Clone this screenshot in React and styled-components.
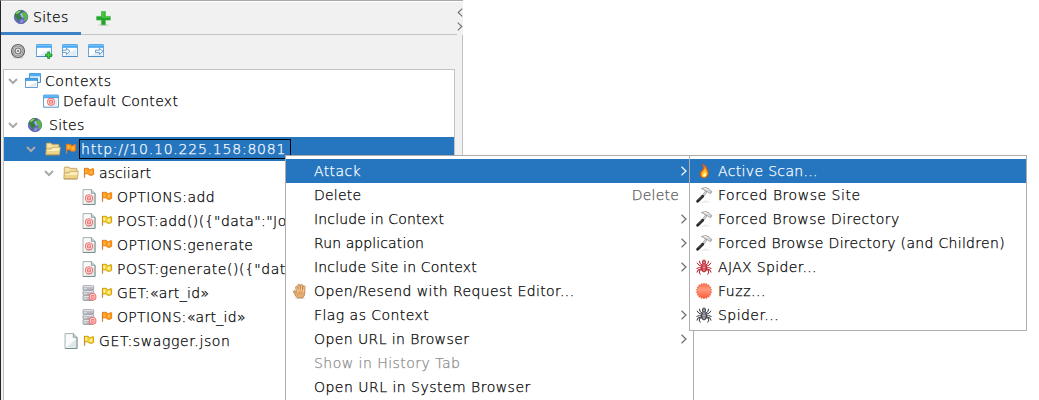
import React from "react";
import styled, { createGlobalStyle, css } from "styled-components";

const GlobalStyle = createGlobalStyle`
  body {
    margin: 0;
    background: #fff;
    overflow: hidden;
  }
  * {
    box-sizing: border-box;
  }
  svg {
    display: block;
    flex: none;
    overflow: visible;
  }
`;

const Screen = styled.div`
  position: relative;
  width: 1039px;
  height: 400px;
  overflow: hidden;
  background: #fff;
  color: #000;
  font: 200 14px/24px "DejaVu Sans Light", "DejaVu Sans", sans-serif;
  -webkit-text-stroke: 0.25px currentColor;
  white-space: pre;
`;

const Panel = styled.section`
  display: flex;
  flex-direction: column;
  width: 463px;
  height: 400px;
  background: #f1f1f1;
  border-left: 1px solid #24232e;
  border-top: 1px solid #a9a9a9;
`;

const TabBar = styled.header`
  display: flex;
  height: 34px;
  border-top: 1px solid #fff;
`;

const TabStrip = styled.div`
  display: flex;
  flex: none;
  width: 456px;
  border-bottom: 1px solid #c2c2c2;
`;

const ActiveTab = styled.div`
  display: flex;
  align-items: center;
  gap: 4px;
  width: 80px;
  height: 33px;
  padding-left: 12px;
  border-bottom: 3px solid #3d80c4;
`;

const AddTab = styled.div`
  display: flex;
  align-items: center;
  width: 44px;
  height: 32px;
  padding-left: 14px;
`;

const ScrollArrows = styled.div`
  display: flex;
  flex-direction: column;
  gap: 5px;
  width: 6px;
  padding-top: 6px;
`;

const NextTabEdge = styled.span`
  width: 1px;
  height: 3px;
  margin: auto 0 0 auto;
  background: #8dbde4;
`;

const Toolbar = styled.div`
  display: flex;
  align-items: center;
  gap: 10px;
  height: 34px;
  padding: 0 0 2px 9px;
  border-right: 1px solid #c2c2c2;
`;

const TreeFrame = styled.div`
  flex: 1;
  padding: 0 7px 0 2px;
  border-right: 1px solid #c2c2c2;
`;

const Tree = styled.div`
  height: 100%;
  padding-top: 1px;
  border: 1px solid #c2c2c2;
  border-bottom: 0;
  background: #fff;
`;

const Branch = styled.div`
  margin-top: ${(p) => p.$top || 0}px;
`;

const TreeRow = styled.div`
  display: flex;
  align-items: center;
  height: ${(p) => p.$height || 24}px;
  padding-left: ${(p) => p.$indent}px;
  overflow: hidden;
  ${(p) =>
    p.$selected &&
    css`
      background: #2675bf;
      color: #fff;
    `}
`;

const Toggle = styled.span`
  display: flex;
  width: ${(p) => p.$width || 19}px;
  flex: none;
`;

const TreeIcon = styled.span`
  flex: none;
  width: ${(p) => p.$width || 18}px;
`;

const Label = styled.span`
  letter-spacing: ${(p) => p.$track || 0}px;
`;

const FocusLabel = styled(Label)`
  height: 20px;
  margin-left: -2px;
  width: 212px;
  padding: 0 0 0 1px;
  line-height: 18px;
  border: 1px solid #000;
`;

const Menu = styled.div`
  position: absolute;
  top: 155px;
  left: ${(p) => p.$left}px;
  width: ${(p) => p.$width}px;
  height: ${(p) => p.$height}px;
  padding: 3px 0;
  background: #fff;
  border: 1px solid #adadad;
`;

const MenuItem = styled.div`
  display: flex;
  align-items: center;
  height: 24px;
  padding: 0 6px;
  color: ${(p) => (p.$active ? "#fff" : p.$disabled ? "#8c8c8c" : "#000")};
  background: ${(p) => (p.$active ? "#2675bf" : "transparent")};
`;

const MenuIcon = styled.span`
  width: 22px;
  height: 16px;
  flex: none;
`;

const Shortcut = styled(Label)`
  margin-left: auto;
  margin-right: 8px;
  color: #595959;
`;

const ArrowSlot = styled.span`
  margin-left: auto;
`;

function Svg({ size = 16, children }) {
  return (
    <svg width={size} height={size} viewBox="0 0 16 16">
      {children}
    </svg>
  );
}

const Chevron = () => (
  <svg width="10" height="8" viewBox="0 0 10 8" fill="none" stroke="#a9a9a9" strokeWidth="2">
    <path d="M1 2l4 4 4-4" />
  </svg>
);

const Arrow = ({ color = "#6e6e6e", left, height = 10 }) => (
  <svg width="6" height={height} viewBox="0 0 6 10" fill="none" stroke={color} strokeWidth="1.2">
    <path d={left ? "M5.5 .8L1 5l4.5 4.2" : "M.5 .8L5 5 .5 9.2"} />
  </svg>
);

const Globe = () => (
  <Svg>
    <circle cx="8" cy="8" r="6.7" fill="#6c6bc9" stroke="#4a4c9c" strokeWidth=".7" />
    <path d="M2 5.2Q4 1 8.3 1.3L10 2.4 8.2 4 6 5 7.2 7 9 8.3 8 10 6.2 10.4 5.7 13.8Q4 12.5 4.5 10L2 7.5Z" fill="#35803a" />
    <path d="M9 4L12 2.8Q15.4 5.5 14.3 10L12.3 12.7 11 10.6 11.8 8.6 9.7 7 8.7 5.4Z" fill="#56bb3f" />
    <path d="M3 4Q5 1.5 8 1.8L6.7 3.2 3.4 5.3Z" fill="#94d67a" />
    <path d="M7.3 4.7l1.6-.8.8 2.7 1.2 2-2.2-.4z" fill="#b4b9f2" />
    <path d="M8.1 11l2.8.5-2.2 2.4-1.5-.5z" fill="#9295e8" />
  </Svg>
);

const Plus = () => (
  <Svg>
    <ellipse cx="8.5" cy="15" rx="6" ry=".8" fill="#c9ccc9" />
    <path d="M6.4 1.4h4v5h4.9v3.7h-4.9v4.7h-4v-4.7H1.6V6.4h4.8z" fill="#24a42b" stroke="#41b648" strokeWidth=".6" />
    <path d="M7.1 2h2.5v5.1h5v1H7.1z" fill="#40ca3a" />
  </Svg>
);

const TargetGray = () => (
  <Svg>
    <ellipse cx="8" cy="14.6" rx="6" ry=".9" fill="#d2d2d2" />
    <circle cx="8" cy="8" r="6.5" fill="#d9d9d9" stroke="#626262" strokeWidth="1.2" />
    <circle cx="8" cy="8" r="5" fill="none" stroke="#8b8b8b" strokeWidth="1" />
    <circle cx="8" cy="8" r="3" fill="#e5e5e5" stroke="#717171" strokeWidth="1.2" />
    <circle cx="8" cy="8" r="1.1" fill="#747474" />
  </Svg>
);

const WindowShape = ({ y = 2 }) => (
  <g transform={`translate(0 ${y})`}>
    <rect x=".5" y=".5" width="15" height="12" rx=".8" fill="#e9f3fc" stroke="#6aa5d6" />
    <path d="M0 12.5h16" stroke="#4886bd" strokeWidth=".8" />
    <path d="M.5 .5h15v3.3H.5z" fill="#48a8f1" />
    <path d="M1 1h14v1H1z" fill="#75c3fa" />
    <path d="M1.5 4h13v8h-13z" fill="#fff" />
    <path d="M2 12L14 5v7z" fill="#e0ecf7" />
  </g>
);

const WindowAdd = () => (
  <Svg>
    <WindowShape y={1} />
    <path d="M11.7 9h2v2.2h2.2v2h-2.2v2.3h-2v-2.3H9.5v-2h2.2z" fill="#43d33e" stroke="#13871c" strokeWidth=".8" />
  </Svg>
);

const WindowIn = () => (
  <Svg>
    <WindowShape y={1} />
    <path d="M.5 7.2H4.4V5.2L8 8.3 4.4 11.4V9.4H.5z" fill="#fff" stroke="#4a86bf" strokeWidth=".8" />
  </Svg>
);

const WindowOut = () => (
  <Svg>
    <WindowShape y={1} />
    <path d="M7.5 7.2h3.9v-2L15 8.3l-3.6 3.1v-2H7.5z" fill="#fff" stroke="#4a86bf" strokeWidth=".8" />
  </Svg>
);

const Windows = () => (
  <Svg>
    <path d="M4.5.5h11v9h-11z" fill="#e5f2fd" stroke="#4b93cc" />
    <path d="M4.5 .5h11v2.8h-11z" fill="#4eaef5" />
    <path d="M.5 5.5h12v9H.5z" fill="#fff" stroke="#6d9dc6" />
    <path d="M.5 5.3h12v2.2H.5z" fill="#42a4ef" stroke="#348bd0" strokeWidth=".6" />
    <path d="M1.5 13.5l10-4v4z" fill="#e0e9f1" />
  </Svg>
);

const Bullseye = ({ x = 8, y = 9, r = 3.8 }) => (
  <g fill="#fff3f0" stroke="#f0706c">
    <circle cx={x} cy={y} r={r} strokeWidth="1.1" />
    <circle cx={x} cy={y} r={r / 2.1} strokeWidth="1.1" />
    <circle cx={x} cy={y} r=".5" fill="#e64a4a" stroke="none" />
  </g>
);

const ContextWindow = () => (
  <Svg>
    <WindowShape y={1.5} />
    <Bullseye y={8.7} r={3.4} />
  </Svg>
);

const Folder = () => (
  <Svg>
    <path d="M1.2 13.4V3Q1.2 2 2.2 2H6l1.2 1.3h6q.8 0 .8.8v9z" fill="#e6ca85" stroke="#bf9f5c" strokeWidth=".7" />
    <path d="M2.2 12V3h3.4L6.8 4.5h6.2v2H2.2z" fill="#f6e5ac" />
    <path d="M.8 13.8l.6-5.2Q1.5 8 2.2 8h3.6l1.5-1.8h8.1l-1 7.6z" fill="#efd488" stroke="#c4a15a" strokeWidth=".7" />
    <path d="M2 8.8h4.2l1.5-1.8h6.8l-.4 3H1.9z" fill="#fbeebd" />
    <path d="M1 14.1h13.3" stroke="#a58a54" strokeWidth=".7" />
  </Svg>
);

const Flag = ({ yellow }) => (
  <svg width="12" height="12" viewBox="0 0 12 12">
    <path d="M1.5 1v9.8" stroke={yellow ? "#b8912a" : "#cc8433"} strokeWidth="1.2" />
    <path
      d="M1.6 1.3H5.4L6.4 2.8H8L8.8 1.8H10.6V7.3L9.3 8.2H6.4L5.2 6.8H1.6z"
      fill={yellow ? "#f8d02a" : "#ff981c"}
      stroke={yellow ? "#c99a08" : "#ea7c0c"}
      strokeWidth=".9"
    />
    <path
      d="M2.4 2.3h1.7v3.4H2.4zM6.8 3.7h2.3v3H6.8z"
      fill={yellow ? "#fff2a8" : "#ffb64a"}
    />
  </svg>
);

const PageShape = () => (
  <g>
    <path d="M2 .5h8.5l3.5 3.6v11.4H2z" fill="#edf3f3" stroke="#a4b1b2" strokeWidth=".9" />
    <path d="M3 1.4h6.7v3.7h3.5v9.6H3z" fill="#f8fbfa" />
    <path d="M3 14.7L13.2 6v8.7z" fill="#dce8e7" />
    <path d="M10.3.6v3.7h3.6" fill="#cbd7d8" stroke="#809293" strokeWidth=".8" />
    <path d="M2 15.5h12V4.5" fill="none" stroke="#76898b" strokeWidth=".9" />
  </g>
);

const Page = () => (
  <Svg>
    <PageShape />
  </Svg>
);

const TargetPage = () => (
  <Svg>
    <PageShape />
    <Bullseye y={9.3} r={3.6} />
  </Svg>
);

const Server = () => (
  <Svg>
    {[0.5, 5.5, 10.5].map((y) => (
      <g key={y}>
        <rect x="1.9" y={y} width="10.8" height="4.8" rx="1" fill="#b9bbc1" stroke="#9c9ea4" strokeWidth=".7" />
        <path d={`M2.6 ${y + 1}h9.4`} stroke="#e2e3e7" strokeWidth="1.2" />
        <path d={`M2.6 ${y + 2.4}h3.4v2H2.6z`} fill="#d4d5da" />
        <path d={`M2.4 ${y + 4.7}h9.8`} stroke="#7f8188" strokeWidth=".6" />
      </g>
    ))}
    <Bullseye x={11.6} y={11.8} r={3.3} />
  </Svg>
);

const Hand = () => (
  <Svg>
    <ellipse cx="8" cy="15.2" rx="5.5" ry=".7" fill="#ddd" />
    <path
      d="M5.3 14.8Q3.5 13.6 2.7 11L1.4 8.8Q1.4 7.4 2.7 7.8L4.3 9.6 3.7 4Q4.3 2.4 5.4 3.8L6 6.4 5.9 2Q6.6.3 7.8 1.8L8.2 6.2 8.8 1.8Q9.8.5 10.6 2L10.5 6.5 11.2 3.2Q12.3 2 13 3.5L12.8 9.6Q12.7 13 10.7 14.8z"
      fill="#e5ae70"
      stroke="#b87843"
      strokeWidth=".8"
    />
    <path d="M4.7 4.2l1 5M7 2.5l.4 5M9.7 2.6l-.3 5M12 4l-.5 5" stroke="#f9d6a5" strokeWidth=".8" />
    <path d="M5.4 11.8q2.7-3 5.5-1.7" fill="none" stroke="#c98a51" strokeWidth=".7" />
  </Svg>
);

const Flame = () => (
  <Svg>
    <path d="M6.2.7Q10.8 3.2 11.2 6.7 12.8 8.4 12.2 11.3 11.2 14.7 8 15 4.5 14.6 4 11.2 4 8.9 6.3 7.3 8.9 4.9 6.2.7z" fill="#f57910" stroke="#dc480c" strokeWidth=".6" />
    <path d="M9.1 4.8Q8.7 7.3 6.3 9.1 4.6 11.5 6 13.4 7.3 14.6 9.2 14q2.5-1.2 2.2-4L10 7.3z" fill="#ffc727" />
    <path d="M8.6 8.9q.1 1.6-1.3 2.4-.8 1.6.6 2.5 2.7-.3 2.2-3z" fill="#fff6ad" />
  </Svg>
);

const Hammer = () => (
  <Svg>
    <path d="M3.5 15.7h11L10 13z" fill="#eee" />
    <path d="M10.6 4.2L5.8 10.2" stroke="#8f8f8f" strokeWidth="2.2" />
    <path d="M10.4 4.4L6 9.8" stroke="#dedede" strokeWidth="1.2" />
    <path d="M6.7 9.2L1.6 14.2" stroke="#252525" strokeWidth="2.8" strokeLinecap="round" />
    <path d="M2 13.4l4.3-4.3" stroke="#777" strokeWidth=".6" />
    <path d="M5.4 1.6Q9.6-.4 12.6 1.6L13.8 3.4 15.8 4.3 15 6.4 12.6 5.8 11.4 4.6 9 4Q8 2.2 5.4 1.6z" fill="#d8d8d8" stroke="#868686" strokeWidth=".7" />
    <path d="M7.6 1.6Q10.4 1 12 2.8" fill="none" stroke="#fff" strokeWidth=".7" />
  </Svg>
);

const SpiderIcon = ({ red }) => {
  const line = red ? "#b71624" : "#34363c";
  return (
    <Svg>
      <path
        d="M6.3 6.2L4.2 4.7 3.4 1.8M9.7 6.2l2.1-1.5.8-2.9M6 7.4L2.9 6.2 1 3.8M10 7.4l3.1-1.2L15 3.8M6 9L3.5 8.6.5 9.5M10 9l2.5-.4 3 .9M6.3 10.3l-2.8 1.2-.2 2.7 1.5 1.2M9.7 10.3l2.8 1.2.2 2.7-1.5 1.2M5.9 9.8L2 11 .9 13.5M10.1 9.8L14 11l1.1 2.5"
        fill="none"
        stroke={line}
        strokeWidth="1"
      />
      <path d="M6.5 4.5V1.8Q8-.1 9.5 1.8v2.7L8 5.4z" fill={red ? "#d8777d" : "#92949c"} stroke={line} strokeWidth=".8" />
      <ellipse cx="8" cy="9" rx="2.5" ry="4" fill={red ? "#ce4b55" : "#797b86"} stroke={line} strokeWidth=".8" />
      <path d="M8 5v7M6.7 8.4h2.6" stroke={red ? "#ef9498" : "#b6b8c0"} strokeWidth=".8" />
    </Svg>
  );
};

const starPoints = Array.from({ length: 36 }, (_, i) => {
  const r = i % 2 ? 6.7 : 8;
  const a = (i * Math.PI) / 18;
  return `${8 + r * Math.sin(a)},${8 - r * Math.cos(a)}`;
}).join(" ");

const Burst = () => (
  <Svg>
    <defs>
      <linearGradient id="burst" x1="0" y1="0" x2="0" y2="1">
        <stop offset="0" stopColor="#f66b49" />
        <stop offset=".4" stopColor="#ff9a7c" />
        <stop offset="1" stopColor="#fb5637" />
      </linearGradient>
    </defs>
    <polygon points={starPoints} fill="url(#burst)" stroke="#ed5535" strokeWidth=".5" />
  </Svg>
);

const nodes = [
  { text: "asciiart", track: 0.1, indent: 40, icon: <Folder />, open: true },
  { text: "OPTIONS:add", track: 0.4, indent: 77, icon: <TargetPage /> },
  { text: 'POST:add()({"data":"Jo', track: 0.44, indent: 77, icon: <TargetPage />, yellow: true },
  { text: "OPTIONS:generate", track: 0.38, indent: 77, icon: <TargetPage /> },
  { text: 'POST:generate()({"dat', track: 0.53, indent: 77, icon: <TargetPage />, yellow: true },
  { text: "GET:«art_id»", track: 0.36, indent: 77, icon: <Server />, yellow: true },
  { text: "OPTIONS:«art_id»", track: 0.3, indent: 77, icon: <Server /> },
  { text: "GET:swagger.json", track: 0.61, indent: 59, icon: <Page />, yellow: true },
];

const menuItems = [
  { text: "Attack", track: 0.38, arrow: true, active: true },
  { text: "Delete", track: 0.2, shortcut: "Delete" },
  { text: "Include in Context", track: 0.15, arrow: true },
  { text: "Run application", track: 0.1, arrow: true },
  { text: "Include Site in Context", track: 0.18, arrow: true },
  { text: "Open/Resend with Request Editor...", track: 0.4, icon: <Hand /> },
  { text: "Flag as Context", track: 0.45, arrow: true },
  { text: "Open URL in Browser", track: 0.41, arrow: true },
  { text: "Show in History Tab", track: 0.47, disabled: true },
  { text: "Open URL in System Browser", track: 0.48 },
];

const attackItems = [
  { text: "Active Scan...", track: 0.34, icon: <Flame />, active: true },
  { text: "Forced Browse Site", track: 0.53, icon: <Hammer /> },
  { text: "Forced Browse Directory", track: 0.48, icon: <Hammer /> },
  { text: "Forced Browse Directory (and Children)", track: 0.31, icon: <Hammer /> },
  { text: "AJAX Spider...", track: 0.34, icon: <SpiderIcon red /> },
  { text: "Fuzz...", track: 0.56, icon: <Burst /> },
  { text: "Spider...", track: 0.45, icon: <SpiderIcon /> },
];

function MenuList({ items, ...box }) {
  return (
    <Menu {...box}>
      {items.map((item) => (
        <MenuItem key={item.text} $active={item.active} $disabled={item.disabled}>
          <MenuIcon>{item.icon}</MenuIcon>
          <Label $track={item.track}>{item.text}</Label>
          {item.shortcut && <Shortcut $track={item.track}>{item.shortcut}</Shortcut>}
          {item.arrow && (
            <ArrowSlot>
              <Arrow color={item.active ? "#fff" : undefined} />
            </ArrowSlot>
          )}
        </MenuItem>
      ))}
    </Menu>
  );
}

export default function App() {
  return (
    <Screen>
      <GlobalStyle />
      <Panel>
        <TabBar>
          <TabStrip>
            <ActiveTab>
              <Globe />
              <Label $track={0.28}>Sites</Label>
            </ActiveTab>
            <AddTab>
              <Plus />
            </AddTab>
          </TabStrip>
          <ScrollArrows>
            <Arrow left height={9} />
            <Arrow height={9} />
            <NextTabEdge />
          </ScrollArrows>
        </TabBar>
        <Toolbar>
          <TargetGray />
          <WindowAdd />
          <WindowIn />
          <WindowOut />
        </Toolbar>
        <TreeFrame>
          <Tree>
            <Branch>
              <TreeRow $indent={4} $height={20}>
                <Toggle $width={17}><Chevron /></Toggle>
                <TreeIcon $width={20}><Windows /></TreeIcon>
                <Label $track={0.55}>Contexts</Label>
              </TreeRow>
              <TreeRow $indent={39} $height={20}>
                <TreeIcon $width={20}><ContextWindow /></TreeIcon>
                <Label $track={0.32}>Default Context</Label>
              </TreeRow>
            </Branch>
            <Branch $top={2}>
              <TreeRow $indent={4}>
                <Toggle><Chevron /></Toggle>
                <TreeIcon $width={22}><Globe /></TreeIcon>
                <Label $track={0.28}>Sites</Label>
              </TreeRow>
              <TreeRow $indent={22} $selected>
                <Toggle><Chevron /></Toggle>
                <TreeIcon $width={20}><Folder /></TreeIcon>
                <TreeIcon $width={16}><Flag /></TreeIcon>
                <FocusLabel $track={0.78}>http://10.10.225.158:8081</FocusLabel>
              </TreeRow>
              {nodes.map((node) => (
                <TreeRow key={node.text} $indent={node.indent}>
                  {node.open && <Toggle><Chevron /></Toggle>}
                  <TreeIcon $width={20}>{node.icon}</TreeIcon>
                  <TreeIcon $width={16}><Flag yellow={node.yellow} /></TreeIcon>
                  <Label $track={node.track}>{node.text}</Label>
                </TreeRow>
              ))}
            </Branch>
          </Tree>
        </TreeFrame>
      </Panel>
      <MenuList items={menuItems} $left={285} $width={409} $height={260} />
      <MenuList items={attackItems} $left={689} $width={338} $height={176} />
    </Screen>
  );
}
